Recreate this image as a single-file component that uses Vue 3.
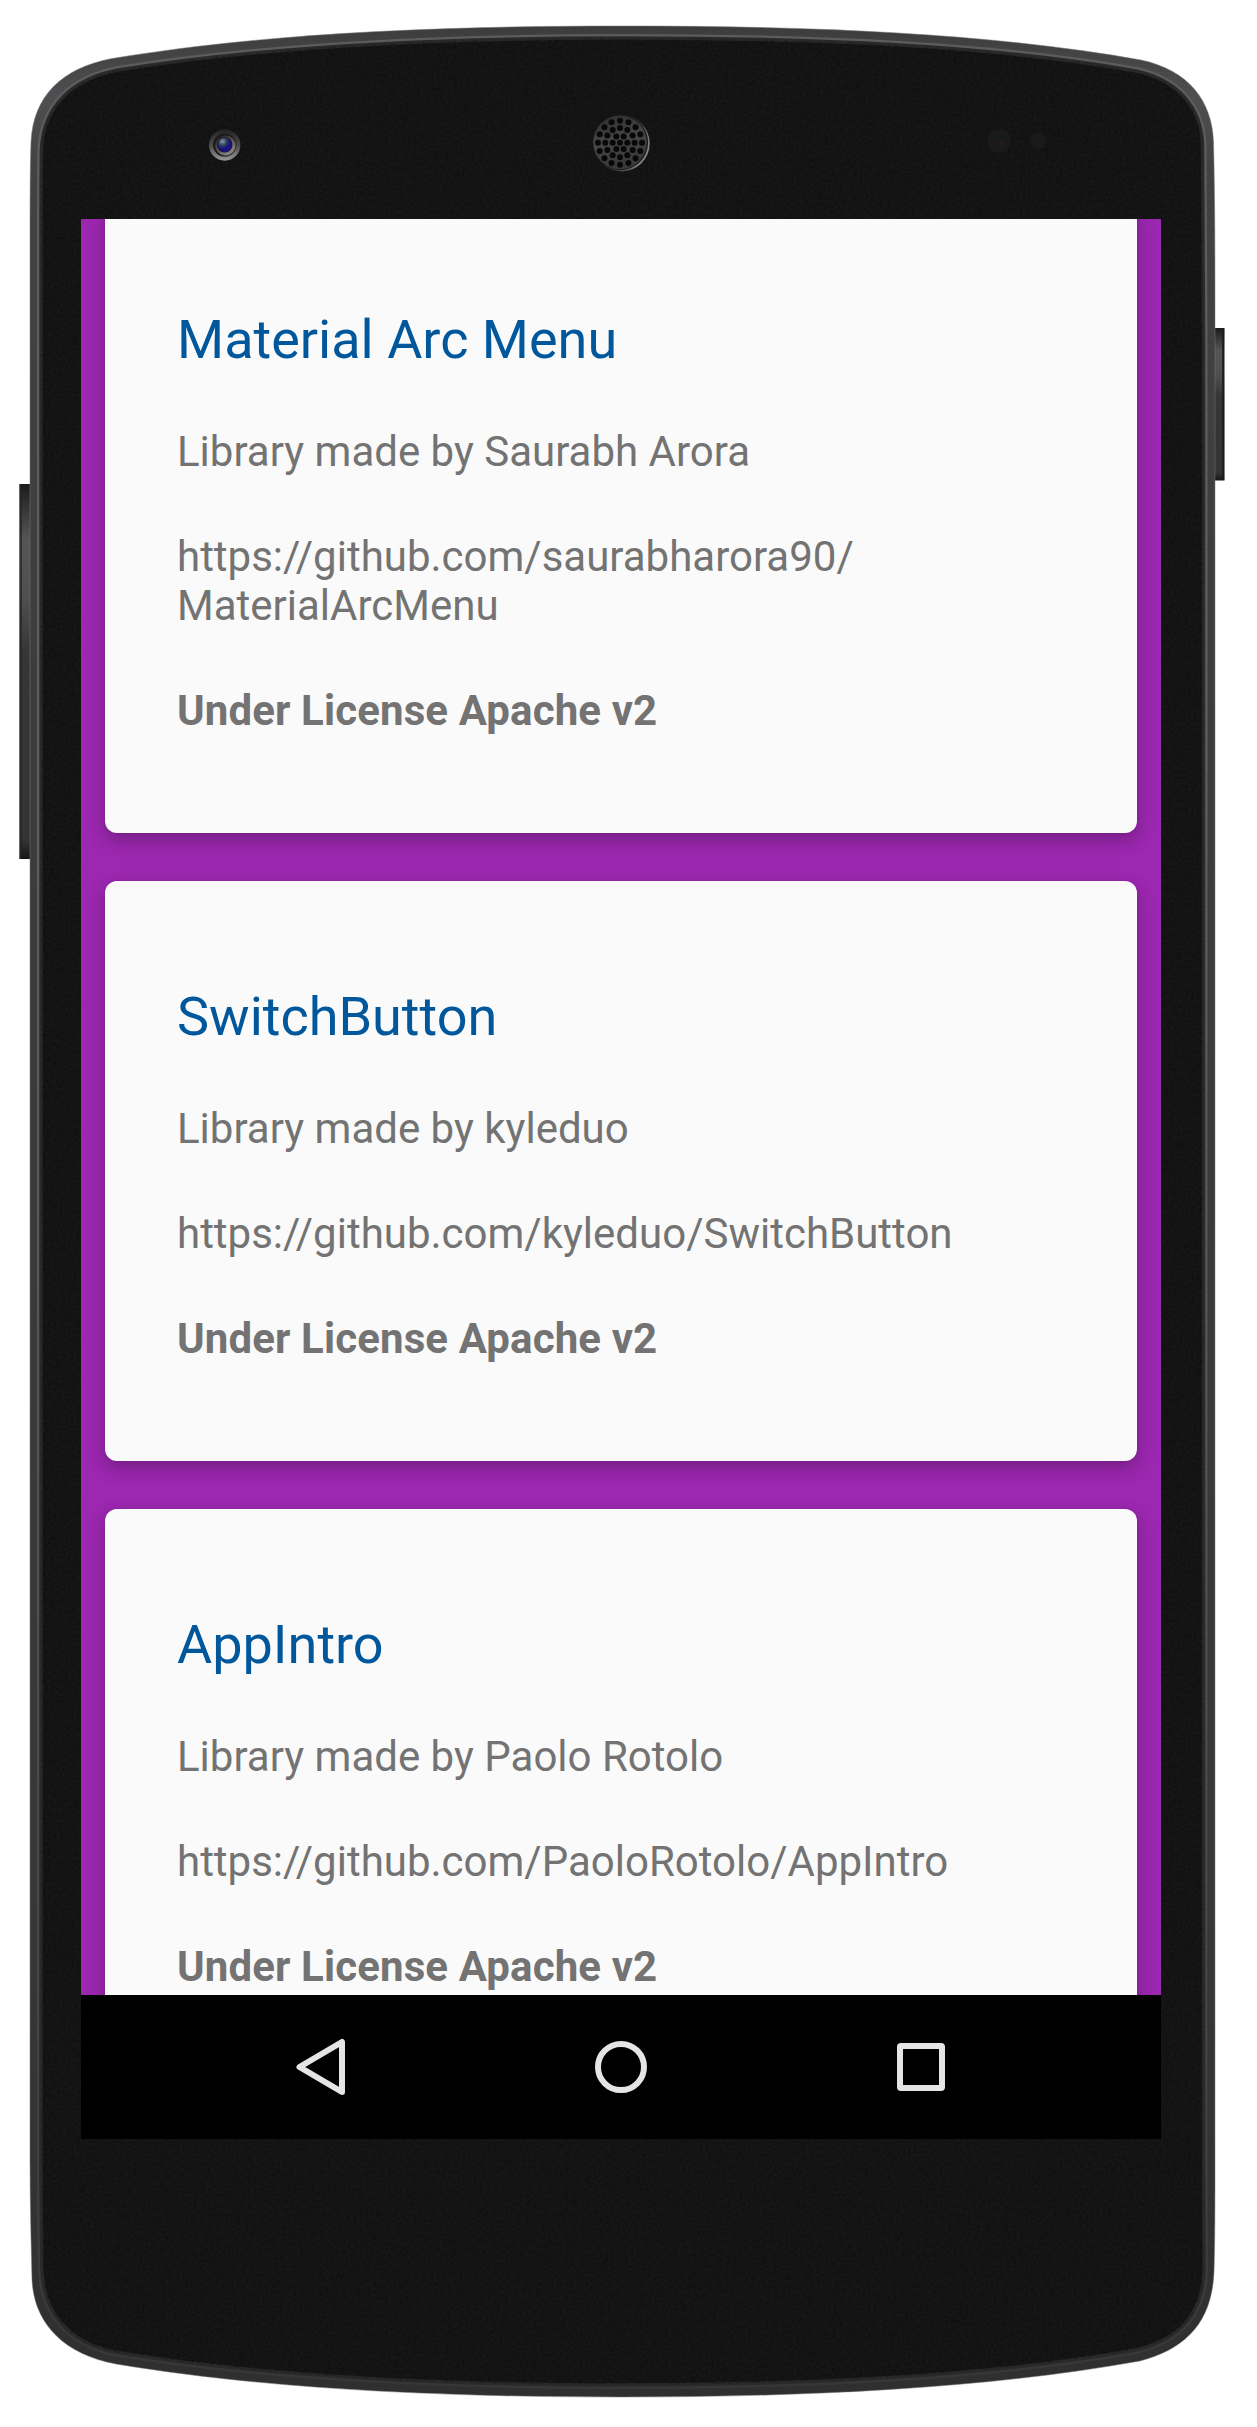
<script setup>
const libraries = [
  {
    title: 'Material Arc Menu',
    author: 'Library made by Saurabh Arora',
    url: ['https://github.com/saurabharora90/', 'MaterialArcMenu'],
    license: 'Under License Apache v2',
  },
  {
    title: 'SwitchButton',
    author: 'Library made by kyleduo',
    url: ['https://github.com/kyleduo/SwitchButton'],
    license: 'Under License Apache v2',
  },
  {
    title: 'AppIntro',
    author: 'Library made by Paolo Rotolo',
    url: ['https://github.com/PaoloRotolo/AppIntro'],
    license: 'Under License Apache v2',
  },
]

// Speaker grille: concentric rings of holes around a centre hole.
const rings = [
  { count: 1, radius: 0 },
  { count: 6, radius: 7.3 },
  { count: 12, radius: 14.6 },
  { count: 16, radius: 22 },
]
const holes = rings.flatMap(({ count, radius }) =>
  Array.from({ length: count }, (_, i) => {
    const a = (i / count) * Math.PI * 2
    return { x: 620 + radius * Math.cos(a), y: 142.7 + radius * Math.sin(a) }
  }),
)

const shell =
  'M30 260 C30 205 30 170 31 142 C33 96 62 68 112 58.5 C260 34 430 26 621 26 C812 26 990 33 1141 60 C1188 70 1212 100 1213.5 142 C1215 200 1215 260 1215 340 V2160 C1215 2200 1215 2240 1214 2272 C1212 2322 1186 2349 1140 2361 C990 2388 812 2397 621 2397 C430 2397 260 2388 116 2364 C62 2354 34 2322 32 2280 C31 2240 30 2200 30 2160 Z'
const face =
  'M41 260 C41 205 41 170 41.5 148 C44 106 72 79 118 70 C260 47 430 38 621 38 C812 38 990 45 1136 71 C1178 80 1202 108 1202.5 146 C1203 200 1203 260 1203.5 340 V2160 C1204 2200 1204 2240 1204 2272 C1202 2316 1178 2340 1136 2350 C990 2376 812 2385 621 2385 C430 2385 260 2376 114 2352 C68 2342 43 2312 42 2270 C41.5 2240 41 2200 41 2160 Z'
</script>

<template>
  <div class="stage">
    <svg class="device" viewBox="0 0 1257 2427" width="1257" height="2427" aria-hidden="true">
      <defs>
        <linearGradient id="rim" x1="0" y1="0" x2="0" y2="1">
          <stop offset="0" stop-color="#3c3c3d" />
          <stop offset="0.03" stop-color="#4f4f51" />
          <stop offset="0.06" stop-color="#424244" />
          <stop offset="0.3" stop-color="#3c3c3e" />
          <stop offset="0.8" stop-color="#373738" />
          <stop offset="1" stop-color="#2f2f30" />
        </linearGradient>
        <linearGradient id="bevel" x1="0" y1="0" x2="0" y2="1">
          <stop offset="0" stop-color="#5c5c5f" />
          <stop offset="0.3" stop-color="#606064" />
          <stop offset="0.6" stop-color="#545458" />
          <stop offset="0.9" stop-color="#404041" />
          <stop offset="1" stop-color="#373738" />
        </linearGradient>
        <linearGradient id="button" x1="0" y1="0" x2="0" y2="1">
          <stop offset="0" stop-color="#1b1b1b" />
          <stop offset="0.05" stop-color="#303030" />
          <stop offset="0.15" stop-color="#555555" />
          <stop offset="0.3" stop-color="#505050" />
          <stop offset="0.45" stop-color="#363636" />
          <stop offset="0.95" stop-color="#343434" />
          <stop offset="1" stop-color="#161616" />
        </linearGradient>
        <linearGradient id="lensRing" x1="0" y1="0" x2="0" y2="1">
          <stop offset="0" stop-color="#222222" />
          <stop offset="0.55" stop-color="#505050" />
          <stop offset="1" stop-color="#989898" />
        </linearGradient>
        <linearGradient id="lensInner" x1="0" y1="0" x2="0.6" y2="1">
          <stop offset="0" stop-color="#161616" />
          <stop offset="0.5" stop-color="#55504c" />
          <stop offset="1" stop-color="#8b8784" />
        </linearGradient>
        <radialGradient id="lens" cx="0.35" cy="0.28" r="0.75">
          <stop offset="0" stop-color="#8798a8" />
          <stop offset="0.4" stop-color="#30405e" />
          <stop offset="0.7" stop-color="#161478" />
          <stop offset="1" stop-color="#1c10b8" />
        </radialGradient>
        <linearGradient id="grille" x1="0" y1="0" x2="0.3" y2="1">
          <stop offset="0" stop-color="#2c2c2c" />
          <stop offset="0.5" stop-color="#454545" />
          <stop offset="1" stop-color="#393939" />
        </linearGradient>
        <linearGradient id="grilleEdge" x1="0" y1="0.2" x2="1" y2="0.6">
          <stop offset="0.3" stop-color="#1a1a1a" />
          <stop offset="0.7" stop-color="#4a4a4a" />
          <stop offset="1" stop-color="#8c8c8c" />
        </linearGradient>
        <filter id="grain" x="0" y="0" width="100%" height="100%">
          <feTurbulence type="fractalNoise" baseFrequency="0.35" numOctaves="2" seed="4" />
          <feColorMatrix values="0 0 0 0 0  0 0 0 0 0  0 0 0 0 0  1.2 0 0 0 -0.42" />
          <feComposite in2="SourceGraphic" operator="in" />
        </filter>
      </defs>

      <rect x="19" y="484" width="13" height="375" fill="url(#button)" />
      <path d="M19.7 484V859" stroke="#77777a" stroke-width="1" />
      <path d="M21 485V858" stroke="#222" stroke-width="1.4" />
      <rect x="1213" y="328" width="11.5" height="152.5" fill="url(#button)" />
      <path d="M1223.2 329V480" stroke="#1c1c1c" stroke-width="2" />

      <path :d="shell" fill="url(#rim)" />
      <path :d="shell" fill="none" stroke="#77777a" stroke-width="1" stroke-opacity="0.5" />
      <path :d="face" fill="#151515" stroke="url(#bevel)" stroke-width="8" />
      <path :d="face" fill="#161616" stroke="#2a2a2b" stroke-width="3.5" />
      <path :d="face" fill="#000" filter="url(#grain)" opacity="0.5" />

      <circle cx="224.7" cy="145" r="15.7" fill="url(#lensRing)" />
      <circle cx="224.7" cy="145" r="11.6" fill="#1b1a19" />
      <circle cx="225.4" cy="145.4" r="10.2" fill="url(#lensInner)" />
      <circle cx="224.6" cy="144.8" r="7.7" fill="#17151c" />
      <circle cx="224.6" cy="144.6" r="6.9" fill="url(#lens)" />

      <circle cx="621.6" cy="143.3" r="28.1" fill="url(#grilleEdge)" />
      <circle cx="620.5" cy="142.6" r="27.6" fill="#1a1a1a" />
      <circle cx="620" cy="142.4" r="26.8" fill="url(#grille)" />
      <circle v-for="(h, i) in holes" :key="i" :cx="h.x" :cy="h.y" r="3" fill="#080808" />

      <circle cx="999" cy="141" r="12" fill="#1a1a1a" />
      <circle cx="1001.5" cy="143" r="2" fill="#2b1a12" />
      <circle cx="1038" cy="140.5" r="8" fill="#1a1a1a" />
      <circle cx="1039" cy="140.5" r="1.5" fill="#2b1a12" />
    </svg>

    <main class="screen">
      <section class="list">
        <article v-for="lib in libraries" :key="lib.title" class="card">
          <h2 class="title">{{ lib.title }}</h2>
          <p>{{ lib.author }}</p>
          <p><span v-for="part in lib.url" :key="part" class="line">{{ part }}</span></p>
          <p class="license">{{ lib.license }}</p>
        </article>
      </section>
      <nav class="navbar">
        <svg viewBox="0 0 60 60" width="60" height="60">
          <path d="M8.5 30L51 5V55Z" fill="none" stroke="#e5e5e5" stroke-width="6" stroke-linejoin="round" />
        </svg>
        <svg viewBox="0 0 60 60" width="60" height="60">
          <circle cx="30" cy="30" r="23" fill="none" stroke="#e5e5e5" stroke-width="6" />
        </svg>
        <svg viewBox="0 0 60 60" width="60" height="60">
          <path fill="#e5e5e5" fill-rule="evenodd" d="M10 6H50A4 4 0 0 1 54 10V50A4 4 0 0 1 50 54H10A4 4 0 0 1 6 50V10A4 4 0 0 1 10 6ZM12 12V48H48V12Z" />
        </svg>
      </nav>
    </main>
  </div>
</template>

<style>
body {
  margin: 0;
  background: #fff;
}
</style>

<style scoped>
.stage {
  position: relative;
  box-sizing: border-box;
  width: 1257px;
  height: 2427px;
  padding: 219px 96px 0 81px;
  overflow: hidden;
  background: #fff;
  font-family: Roboto, sans-serif;
}
.device {
  position: absolute;
  inset: 0;
}
.screen {
  position: relative;
  display: flex;
  flex-direction: column;
  width: 1080px;
  height: 1920px;
  overflow: hidden;
}
.list {
  display: flex;
  flex: 1;
  flex-direction: column;
  gap: 48px;
  min-height: 0;
  padding: 0 24px;
  overflow: hidden;
  background: #9c27b0;
}
.card {
  flex: none;
  box-sizing: border-box;
  padding: 104px 72px 98px;
  border-radius: 12px;
  background: #fafafa;
  box-shadow: 0 7px 18px rgba(0, 0, 0, 0.25), 0 0 3px rgba(0, 0, 0, 0.08);
}
.card:first-child {
  margin-top: -15px;
}
.title {
  margin: 0;
  color: #01579b;
  font-size: 54px;
  font-weight: 400;
  line-height: 64px;
}
p {
  margin: 56px 0 0;
  color: #737373;
  font-size: 42px;
  line-height: 49px;
}
.title + p {
  margin-top: 55px;
}
.line {
  display: block;
}
.license {
  font-weight: 700;
  letter-spacing: 0.12px;
}
.navbar {
  display: flex;
  flex: none;
  align-items: center;
  justify-content: center;
  gap: 240px;
  height: 144px;
  background: #000;
}
</style>
